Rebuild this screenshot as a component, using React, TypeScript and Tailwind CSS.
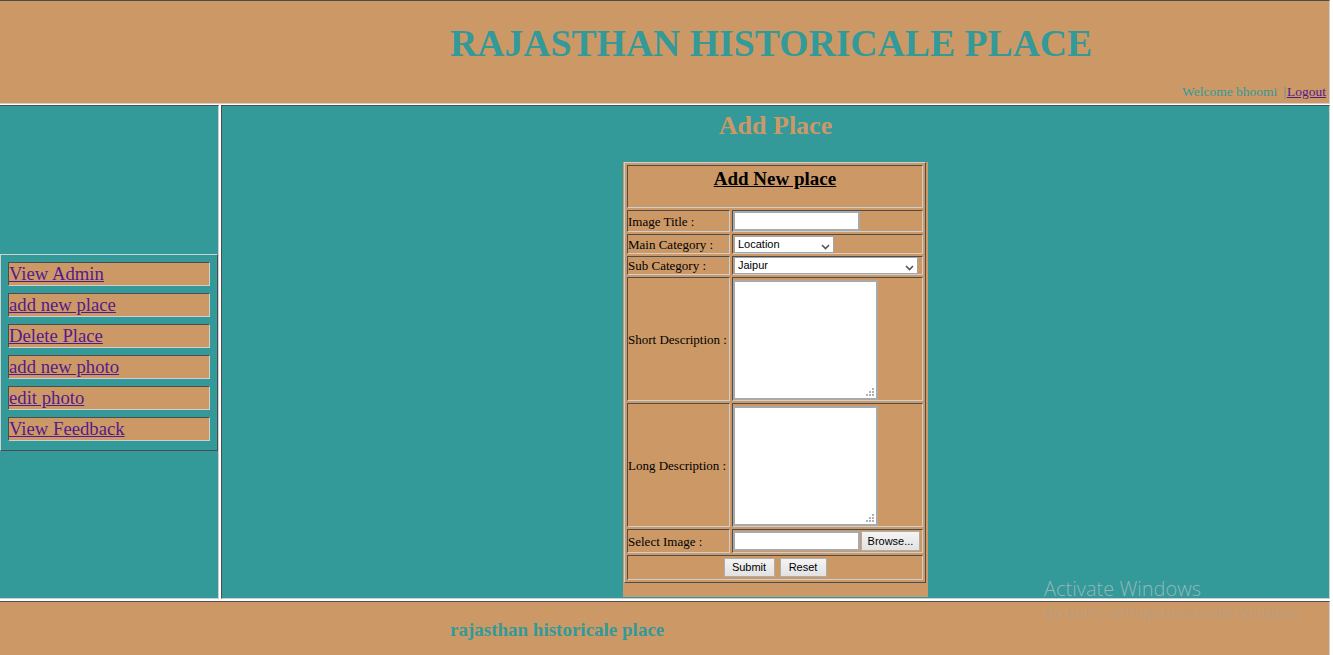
import React from 'react';

// inset cell borders: dark top/left, light bottom/right
const inset = 'border border-t-[#4d4d4d] border-l-[#4d4d4d] border-b-[#cfcfcf] border-r-[#cfcfcf]';

const menuLinks = ['View Admin', 'add new place', 'Delete Place', 'add new photo', 'edit photo', 'View Feedback'];

const Chevron = () => (
  <svg width="9" height="6" viewBox="0 0 9 6">
    <path d="M1 1 L4.5 4.5 L8 1" stroke="#555" strokeWidth="1.6" fill="none" />
  </svg>
);

const Grip = () => (
  <svg width="8" height="8" viewBox="0 0 8 8" className="absolute right-[2px] bottom-[2px]">
    <rect x="6" y="0" width="2" height="2" fill="#b0b0b0" />
    <rect x="3" y="3" width="2" height="2" fill="#b0b0b0" />
    <rect x="6" y="3" width="2" height="2" fill="#b0b0b0" />
    <rect x="0" y="6" width="2" height="2" fill="#b0b0b0" />
    <rect x="3" y="6" width="2" height="2" fill="#b0b0b0" />
    <rect x="6" y="6" width="2" height="2" fill="#b0b0b0" />
  </svg>
);

const Label = ({ text }: { text: string }) => (
  <div className={`${inset} flex items-center text-[13px] leading-[15px] text-black`}>{text}</div>
);

const TextArea = () => (
  <div className={`${inset} pt-[1px]`}>
    <div className="relative w-[145px] h-[120px] bg-white border-2 border-[#a9a9a9] mt-[1px]">
      <Grip />
    </div>
  </div>
);

const Select = ({ value, width, height }: { value: string; width: string; height: string }) => (
  <div className={`${width} ${height} bg-white border border-[#a5a5a5] flex items-center justify-between pl-[3px] pr-[3px] font-['Liberation_Sans',Arial,sans-serif] text-[11px] text-black`}>
    <span>{value}</span>
    <span className="pt-[4px]"><Chevron /></span>
  </div>
);

const Btn = ({ text, width }: { text: string; width: string }) => (
  <div className={`${width} h-[19px] flex items-center justify-center border border-[#adadad] bg-gradient-to-b from-[#f4f4f4] to-[#e2e2e2] font-['Liberation_Sans',Arial,sans-serif] text-[11px] text-black`}>
    {text}
  </div>
);

const App: React.FC = () => {
  return (
    <div className="relative w-[1333px] h-[655px] overflow-hidden bg-white font-['Liberation_Serif','Times_New_Roman',serif]">
      <div className="w-[1330px] flex flex-col">
        {/* Header */}
        <div className={`h-[104px] bg-[#cc9966] ${inset} border-l-0 flex flex-col justify-between pt-[20px] pb-[4px]`}>
          <h1 className="pl-[450px] text-[37.7px] leading-[44px] font-bold text-[#339999]">RAJASTHAN HISTORICALE PLACE</h1>
          <div className="flex justify-end pr-[3px] text-[13.5px] leading-[15px] text-[#339999]">
            <span>Welcome bhoomi</span>
            <span className="ml-[6px] mr-[1px]">|</span>
            <span className="text-[#551a8b] underline">Logout</span>
          </div>
        </div>

        {/* Body row */}
        <div className="flex gap-[2px] h-[494px] mt-[1px]">
          <div className="w-[219px] bg-[#339999] border border-l-0 border-t-[#4d4d4d] border-b-[#cfcfcf] border-r-[#cfcfcf] flex items-center">
            <div className="w-[218px] border border-t-[#cfcfcf] border-l-[#cfcfcf] border-b-[#4d4d4d] border-r-[#4d4d4d] pt-[7px] pb-[9px] px-[7px] flex flex-col gap-[7px]">
              {menuLinks.map(l => (
                <div key={l} className={`h-[24px] bg-[#cc9966] ${inset} text-[18.7px] leading-[22px] text-[#551a8b]`}>
                  <span className="underline">{l}</span>
                </div>
              ))}
            </div>
          </div>

          <div className={`w-[1109px] bg-[#339999] ${inset} flex flex-col items-center pt-[5px]`}>
            <h2 className="text-[26px] leading-[30px] font-bold text-[#cc9966]">Add Place</h2>

            <div className="mt-[21px] w-[305px] h-[435px] bg-[#cc9966] pl-[1px] pr-[2px]">
              <div className="w-[302px] border border-t-[#d0d0d0] border-l-[#d0d0d0] border-b-[#4d4d4d] border-r-[#4d4d4d] p-[2px] grid grid-cols-[103px_191px] grid-rows-[43px_22px_20px_19px_124px_124px_24px_25px] gap-[2px]">
                <div className={`col-span-2 ${inset} flex justify-center pt-[2px]`}>
                  <span className="text-[19px] leading-[22px] font-bold underline text-black">Add New place</span>
                </div>

                <Label text="Image Title :" />
                <div className={inset}>
                  <div className="w-[127px] h-[20px] bg-white border-2 border-[#a9a9a9]" />
                </div>

                <Label text="Main Category :" />
                <div className={`${inset} pl-[1px] pt-[1px]`}>
                  <Select value="Location" width="w-[100px]" height="h-[17px]" />
                </div>

                <Label text="Sub Category :" />
                <div className={`${inset} pl-[1px]`}>
                  <Select value="Jaipur" width="w-[184px]" height="h-[17px]" />
                </div>

                <Label text="Short Description :" />
                <TextArea />

                <Label text="Long Description :" />
                <TextArea />

                <Label text="Select Image :" />
                <div className={`${inset} flex items-center`}>
                  <div className="w-[127px] h-[20px] bg-white border-2 border-[#a9a9a9]" />
                  <div className="w-[59px] h-[20px] ml-[1px] flex items-center justify-center border border-[#adadad] bg-gradient-to-b from-[#f4f4f4] to-[#e2e2e2] font-['Liberation_Sans',Arial,sans-serif] text-[11px] text-black">
                    Browse...
                  </div>
                </div>

                <div className={`col-span-2 ${inset} flex items-center justify-center gap-[5px]`}>
                  <Btn text="Submit" width="w-[51px]" />
                  <Btn text="Reset" width="w-[47px]" />
                </div>
              </div>
            </div>
          </div>
        </div>

        {/* Footer */}
        <div className={`h-[80px] mt-[2px] bg-[#cc9966] ${inset} border-l-0 pl-[450px] pt-[17px]`}>
          <p className="text-[19px] leading-[22px] font-bold text-[#339999]">rajasthan historicale place</p>
        </div>
      </div>

      {/* Windows activation watermark */}
      <div className="absolute left-[1044px] top-[576px] font-['Open_Sans',sans-serif] pointer-events-none">
        <p className="text-[20px] leading-[26px] font-light text-[#c4c4c4]/70">Activate Windows</p>
        <p className="text-[14.5px] leading-[18px] mt-[2px] text-[#a0a0a0]/40">Go to PC settings to activate Windows.</p>
      </div>
    </div>
  );
};

export default App;
